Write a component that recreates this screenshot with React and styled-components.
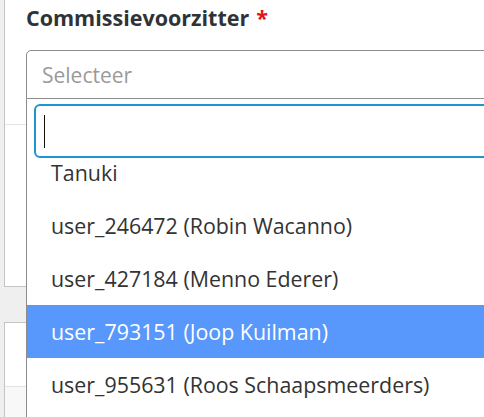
import React, { useEffect, useRef } from 'react';
import styled, { createGlobalStyle } from 'styled-components';

const GlobalStyle = createGlobalStyle`
  html, body {
    margin: 0;
    padding: 0;
    background: #efefef;
    overflow: hidden;
  }
  body {
    font-family: "Open Sans", "Noto Sans", Arial, sans-serif;
    color: #333;
  }
`;

const Page = styled.div`
  display: flex;
  flex-direction: column;
  gap: 35px;
  padding-left: 4px;
  width: 900px;
`;

const Card = styled.div`
  background: #fff;
  border: 1px solid #c4c4c4;
  border-top: ${(p) => (p.$first ? 'none' : '1px solid #c4c4c4')};
  display: flex;
  flex-direction: column;
`;

const Section = styled.div`
  padding: ${(p) => p.$pad || '0 0 0 21px'};
  height: ${(p) => p.$height || 'auto'};
  border-bottom: ${(p) => (p.$divider ? '1px solid #e4e4e4' : 'none')};
  background: ${(p) => p.$bg || 'transparent'};
  box-sizing: content-box;
`;

const Label = styled.label`
  display: block;
  font-size: 21.5px;
  line-height: 28px;
  font-weight: 700;
  color: #2f3337;
  margin: 4px 0 18px 0;
  white-space: nowrap;
`;

const Required = styled.span`
  color: #e0161b;
  margin-left: 7px;
`;

const SelectWrap = styled.div`
  position: relative;
  width: 700px;
`;

const Selection = styled.div`
  height: 49px;
  box-sizing: border-box;
  border: 1px solid #8c8c8c;
  border-radius: 5px 5px 0 0;
  display: flex;
  align-items: center;
  padding: 0 15px;
  font-size: 21px;
  color: #9a9a9a;
  background: #fff;
`;

const Dropdown = styled.div`
  position: absolute;
  top: 100%;
  left: 0;
  right: 0;
  background: #fff;
  border: 1px solid #8c8c8c;
  border-top: none;
  z-index: 10;
`;

const SearchArea = styled.div`
  padding: 5px 7px 4px 7px;
`;

const SearchBox = styled.div`
  height: 54px;
  box-sizing: border-box;
  border: 2px solid #1e96d2;
  border-radius: 6px;
  display: flex;
  align-items: center;
  padding-left: 8px;
`;

const Caret = styled.span`
  width: 1px;
  height: 33px;
  background: #111;
  flex: none;
`;

const SearchInput = styled.input`
  flex: 1;
  border: none;
  outline: none;
  background: transparent;
  font-size: 21px;
  font-family: inherit;
  caret-color: transparent;
  padding: 0;
`;

const Options = styled.ul`
  list-style: none;
  margin: 0;
  padding: 0;
  max-height: 256px;
  overflow: hidden;
`;

const Option = styled.li`
  height: 53px;
  display: flex;
  align-items: center;
  padding-left: 24px;
  font-size: 21.4px;
  color: ${(p) => (p.$active ? '#fff' : '#333')};
  background: ${(p) => (p.$active ? '#5897fb' : 'transparent')};
  white-space: nowrap;
`;

const options = [
  'Tanuki',
  'user_246472 (Robin Wacanno)',
  'user_427184 (Menno Ederer)',
  'user_793151 (Joop Kuilman)',
  'user_955631 (Roos Schaapsmeerders)',
  'user_981204 (Sanne de Vries)',
  'user_102938 (Pieter Jansen)',
];

const App = () => {
  const listRef = useRef(null);

  useEffect(() => {
    if (listRef.current) listRef.current.scrollTop = 16;
  }, []);

  return (
    <>
      <GlobalStyle />
      <Page>
        <Card $first>
          <Section $divider $pad="0 0 25px 21px">
            <Label>
              Commissievoorzitter<Required>*</Required>
            </Label>
            <SelectWrap>
              <Selection>Selecteer</Selection>
              <Dropdown>
                <SearchArea>
                  <SearchBox>
                    <Caret />
                    <SearchInput type="text" aria-label="Zoeken" />
                  </SearchBox>
                </SearchArea>
                <Options ref={listRef}>
                  {options.map((o) => (
                    <Option key={o} $active={o.startsWith('user_793151')}>
                      {o}
                    </Option>
                  ))}
                </Options>
              </Dropdown>
            </SelectWrap>
          </Section>
          <Section $height="161px" />
        </Card>
        <Card>
          <Section $divider $height="63px" />
          <Section $height="200px" $bg="#f8f8f9" />
        </Card>
      </Page>
    </>
  );
};

export default App;
